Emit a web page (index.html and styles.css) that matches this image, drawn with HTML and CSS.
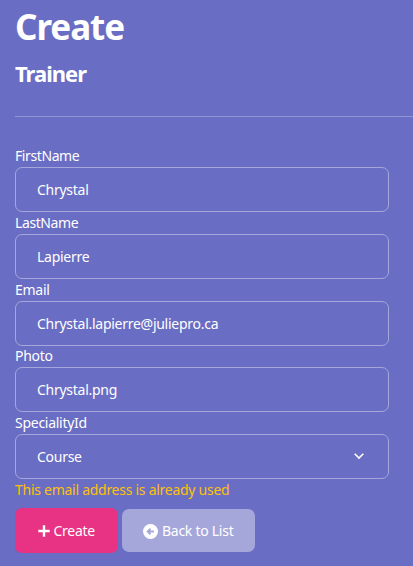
FILE: index.html
```
<!DOCTYPE html>
<html lang="en">
<head>
<meta charset="utf-8">
<title>Create Trainer</title>
<link rel="stylesheet" href="styles.css">
</head>
<body>
<main class="page">
  <h1 class="title"><span>Create</span></h1>
  <h4 class="subtitle"><span>Trainer</span></h4>
  <hr class="rule">
  <form class="form">
    <div class="group"><label class="label tight" for="first">FirstName</label><input class="control" id="first" value="Chrystal"></div>
    <div class="group"><label class="label tight" for="last">LastName</label><input class="control" id="last" value="Lapierre"></div>
    <div class="group"><label class="label" for="email">Email</label><input class="control" id="email" value="Chrystal.lapierre@juliepro.ca"></div>
    <div class="group"><label class="label" for="photo">Photo</label><input class="control" id="photo" value="Chrystal.png"></div>
    <div class="group"><label class="label" for="spec">SpecialityId</label>
      <div class="select-wrap">
        <select class="control" id="spec"><option>Course</option></select>
        <svg class="chevron" viewBox="0 0 12 12" aria-hidden="true"><path d="M1.7 3.8 6 8.1l4.3-4.3"/></svg>
      </div>
    </div>
    <div class="error">This email address is already used</div>
    <div class="actions">
      <button class="btn primary" type="button"><svg class="plus" viewBox="0 0 12 12" aria-hidden="true"><path d="M6 .3v11.4M.3 6h11.4"/></svg><span>Create</span></button>
      <a class="btn secondary"><svg class="back" viewBox="0 0 16 16" aria-hidden="true"><circle cx="8" cy="8" r="8"/><path d="M11.6 8H6M8 5 5 8l3 3"/></svg><span>Back to List</span></a>
    </div>
  </form>
</main>
</body>
</html>
```
FILE: styles.css
```
* { box-sizing: border-box; }
body {
  margin: 0;
  background: #696dc3;
  color: #fff;
  font: 14px/22px "Noto Sans", sans-serif;
  letter-spacing: -0.27px;
  overflow: hidden;
}
.page { padding: 5px 0 0 15px; }
.title { margin: 0; font-size: 35px; line-height: 43px; letter-spacing: -1.05px; }
.subtitle { margin: 12px 0 0; font-size: 22px; line-height: 27px; letter-spacing: -1px; }
.rule { margin: 29px 0 28px; border: 0; height: 1px; background: #9396d4; }
.form { width: 374px; }
.group { height: 66.8px; }
.label { display: block; height: 22px; line-height: 22px; }
.tight { letter-spacing: -0.4px; }
.control {
  display: block;
  width: 100%;
  height: 45px;
  padding: 0 21px;
  border: 1px solid #a5a7db;
  border-radius: 7px;
  background: transparent;
  color: #fff;
  font: inherit;
  letter-spacing: inherit;
  outline: 0;
  appearance: none;
}
.select-wrap { position: relative; }
.chevron {
  position: absolute;
  right: 24px;
  top: 16px;
  width: 12px;
  height: 12px;
  fill: none;
  stroke: #fff;
  stroke-width: 1.6;
}
.error { color: #ffc107; line-height: 22px; }
.actions { display: flex; align-items: center; gap: 4px; margin-top: 7px; }
.btn {
  display: flex;
  align-items: center;
  justify-content: flex-start;
  gap: 4px;
  border: 0;
  border-radius: 7px;
  padding: 2px 0 0 21px;
  color: #fff;
  font: inherit;
  letter-spacing: inherit;
}
.primary { width: 103px; height: 45px; padding-left: 22.5px; background: #e83283; }
.secondary { width: 133px; height: 43px; background: #a5a7db; }
.plus { width: 12px; height: 12px; fill: none; stroke: #fff; stroke-width: 2.4; }
.back { width: 15px; height: 15px; }
.back circle { fill: #fff; }
.back path { fill: none; stroke: #a5a7db; stroke-width: 2; }
```
